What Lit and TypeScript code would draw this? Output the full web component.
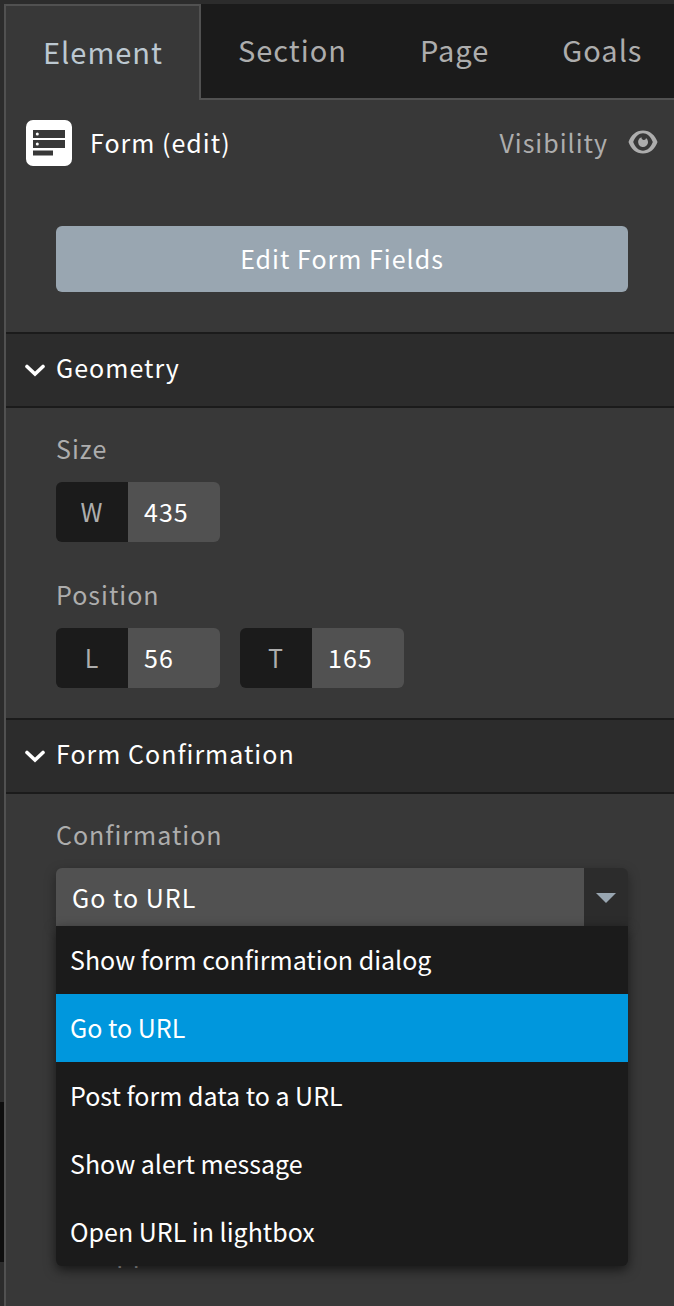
import { LitElement, html, css, svg } from "lit";
import { customElement, property, state } from "lit/decorators.js";
import { classMap } from "lit/directives/class-map.js";

const base = css`
  * {
    box-sizing: border-box;
  }
  button,
  input,
  select {
    font: inherit;
    color: inherit;
    letter-spacing: inherit;
    border: 0;
    margin: 0;
    padding: 0;
    background: none;
    outline: none;
  }
  button {
    cursor: pointer;
  }
`;

const chevron = svg`<path d="M2 2.5 L10 10 L18 2.5" fill="none" stroke="#fff" stroke-width="3.6" stroke-linecap="round" stroke-linejoin="miter" />`;

@customElement("panel-section")
export class PanelSection extends LitElement {
  @property() heading = "";
  @state() private open = true;

  static styles = [
    base,
    css`
      :host {
        display: block;
      }
      .heading {
        margin: 0;
        font: inherit;
      }
      .toggle {
        display: flex;
        align-items: center;
        gap: 10px;
        width: 100%;
        height: 76px;
        padding: 0 20px 6px 18px;
        background: #2c2c2c;
        border-top: 2px solid #1b1b1b;
        border-bottom: 2px solid #1b1b1b;
        color: #fff;
        text-align: left;
      }
      .arrow {
        width: 22px;
        height: 14px;
        margin-top: 8px;
      }
      .body {
        display: flex;
        flex-direction: column;
        gap: 36px;
        padding: 24px 46px 30px 50px;
      }
    `,
  ];

  render() {
    return html`
      <h2 class="heading">
        <button
          class="toggle"
          aria-expanded=${this.open}
          @click=${() => (this.open = !this.open)}
        >
          <svg class="arrow" viewBox="-1 0 22 14" aria-hidden="true">${chevron}</svg>
          <span>${this.heading}</span>
        </button>
      </h2>
      ${this.open ? html`<div class="body"><slot></slot></div>` : ""}
    `;
  }
}

@customElement("number-field")
export class NumberField extends LitElement {
  @property() label = "";
  @property() name = "";
  @property() value = "";

  static styles = [
    base,
    css`
      :host {
        display: block;
      }
      .field {
        display: grid;
        grid-template-columns: 72px 92px;
        height: 60px;
        border-radius: 6px;
        overflow: hidden;
      }
      .label {
        display: grid;
        place-items: center;
        padding-bottom: 2px;
        background: #1b1b1b;
        color: #adadad;
      }
      .input {
        min-width: 0;
        padding: 0 16px 2px;
        background: #515151;
        color: #fff;
      }
    `,
  ];

  render() {
    return html`
      <div class="field">
        <label class="label" for="input">${this.label}</label>
        <input class="input" id="input" type="text" inputmode="numeric" aria-label=${this.name} .value=${this.value} />
      </div>
    `;
  }
}

@customElement("app-root")
export class AppRoot extends LitElement {
  @state() private tab = "Element";
  @state() private confirmation = "Go to URL";
  @state() private menuOpen = true;

  private tabs = ["Element", "Section", "Page", "Goals"];
  private choices = [
    "Show form confirmation dialog",
    "Go to URL",
    "Post form data to a URL",
    "Show alert message",
    "Open URL in lightbox",
  ];

  static styles = [
    base,
    css`
      :host {
        display: grid;
        grid-template-columns: 4px 1fr;
        min-height: 100vh;
        padding-top: 4px;
        box-sizing: border-box;
        overflow: hidden;
        background: #2c2c2c;
        color: #fff;
        font-family: "Noto Sans CJK SC", "Noto Sans", sans-serif;
        font-size: 25px;
        line-height: 32px;
        letter-spacing: 1px;
      }
      .gutter {
        display: flex;
        flex-direction: column;
        justify-content: flex-end;
        padding-bottom: 44px;
      }
      .thumb {
        height: 160px;
        background: #0e0e0e;
      }
      .panel {
        min-width: 0;
        background: #383838;
        border-left: 2px solid #515151;
      }
      .tabs {
        display: flex;
        height: 96px;
        background: #1b1b1b;
      }
      .tab {
        padding: 0 36px 4px 37px;
        font-size: 29px;
        color: #adadad;
        border-bottom: 2px solid #515151;
      }
      .tab.active {
        background: #383838;
        color: #bcc8d1;
        border-top: 2px solid #515151;
        border-right: 2px solid #515151;
        border-bottom: 0;
      }
      .rest {
        flex: 1;
        border-bottom: 2px solid #515151;
      }
      .title {
        display: flex;
        align-items: center;
        gap: 18px;
        padding: 20px 16px 0 20px;
      }
      .badge {
        width: 46px;
        height: 46px;
      }
      .name {
        flex: 1;
        margin: 0;
        padding-bottom: 2px;
        font: inherit;
      }
      .visibility {
        display: flex;
        align-items: center;
        gap: 20px;
        padding-bottom: 2px;
        color: #adadad;
      }
      .eye {
        width: 30px;
        height: 24px;
      }
      .action {
        padding: 60px 46px 40px 50px;
      }
      .edit {
        display: block;
        width: 100%;
        height: 66px;
        padding-bottom: 2px;
        border-radius: 6px;
        background: #99a6b1;
      }
      .group {
        display: flex;
        flex-direction: column;
        gap: 18px;
      }
      .caption {
        color: #adadad;
      }
      .row {
        display: flex;
        gap: 20px;
      }
      .dropdown {
        position: relative;
        border-radius: 6px;
        box-shadow: 0 4px 12px rgba(0, 0, 0, 0.35);
      }
      .control {
        display: grid;
        grid-template-columns: 1fr 44px;
        height: 58px;
        border-radius: 6px 6px 0 0;
        overflow: hidden;
      }
      .select {
        appearance: none;
        min-width: 0;
        padding: 0 16px;
        background: #515151;
      }
      .select option {
        background: #1b1b1b;
      }
      .opener {
        display: grid;
        place-items: center;
        padding-top: 2px;
        background: #2c2c2c;
      }
      .triangle {
        width: 20px;
        height: 10px;
      }
      .menu {
        position: absolute;
        top: 100%;
        left: 0;
        right: 0;
        z-index: 1;
        border-radius: 0 0 6px 6px;
        overflow: hidden;
        background: #1b1b1b;
        box-shadow: 0 4px 12px rgba(0, 0, 0, 0.6);
        letter-spacing: normal;
      }
      .choice {
        display: block;
        width: 100%;
        height: 68px;
        padding: 0 14px 2px;
        text-align: left;
      }
      .choice.selected {
        background: #0097dd;
      }
      .check {
        display: flex;
        align-items: center;
        gap: 14px;
        padding-top: 273px;
        color: #adadad;
      }
      .box {
        appearance: none;
        width: 30px;
        height: 24px;
        border-radius: 4px;
        background: #515151;
      }
    `,
  ];

  private choose(value: string) {
    this.confirmation = value;
    this.menuOpen = false;
  }

  render() {
    return html`
      <div class="gutter"><div class="thumb"></div></div>
      <main class="panel">
        <nav class="tabs" role="tablist">
          ${this.tabs.map(
            (t) => html`<button
              role="tab"
              aria-selected=${t === this.tab}
              class=${classMap({ tab: true, active: t === this.tab })}
              @click=${() => (this.tab = t)}
            >${t}</button>`
          )}
          <span class="rest"></span>
        </nav>

        <header class="title">
          <svg class="badge" viewBox="0 0 46 46" aria-hidden="true">
            <rect width="46" height="46" rx="7" fill="#fff" />
            <path d="M7 10h32v8H7zM7 20h32v8H7zM7 30.500h20v5H7z" fill="#383838" />
            <circle cx="11.300" cy="14" r="1.500" fill="#fff" />
            <circle cx="11.300" cy="24" r="1.500" fill="#fff" />
          </svg>
          <h1 class="name">Form (edit)</h1>
          <button class="visibility">
            <span>Visibility</span>
            <svg class="eye" viewBox="0 0 30 24" aria-hidden="true">
              <path
                fill="#adadad"
                fill-rule="evenodd"
                d="M15 .5C22 .5 27 5 29.500 12C27 19 22 23.500 15 23.500S3 19 .5 12C3 5 8 .5 15 .5zM15 3.300C11 3.300 7.300 6.500 5.200 12c2.100 5.500 5.800 8.700 9.800 8.700S22.700 17.500 24.800 12C22.700 6.500 19 3.300 15 3.300z"
              />
              <path fill="#adadad" d="M13.500 7.300a5 5 0 1 0 4.600 .8a2.200 2.200 0 1 1-4.600 -.8z" />
            </svg>
          </button>
        </header>

        <div class="action"><button class="edit">Edit Form Fields</button></div>

        <panel-section heading="Geometry">
          <div class="group">
            <span class="caption">Size</span>
            <div class="row">
              <number-field label="W" name="Width" value="435"></number-field>
            </div>
          </div>
          <div class="group">
            <span class="caption">Position</span>
            <div class="row">
              <number-field label="L" name="Left" value="56"></number-field>
              <number-field label="T" name="Top" value="165"></number-field>
            </div>
          </div>
        </panel-section>

        <panel-section heading="Form Confirmation">
          <div class="group">
            <label class="caption" for="confirmation">Confirmation</label>
            <div class="dropdown">
              <div class="control">
                <select
                  class="select"
                  id="confirmation"
                  @change=${(e: Event) => this.choose((e.target as HTMLSelectElement).value)}
                >
                  ${this.choices.map(
                    (c) => html`<option ?selected=${c === this.confirmation}>${c}</option>`
                  )}
                </select>
                <button
                  class="opener"
                  aria-label="Confirmation choices"
                  aria-expanded=${this.menuOpen}
                  @click=${() => (this.menuOpen = !this.menuOpen)}
                >
                  <svg class="triangle" viewBox="0 0 20 10" aria-hidden="true">
                    <path d="M0 0h20L10 10z" fill="#99a6b1" />
                  </svg>
                </button>
              </div>
              ${this.menuOpen
                ? html`<div class="menu" role="listbox">
                    ${this.choices.map(
                      (c) => html`<button
                        role="option"
                        aria-selected=${c === this.confirmation}
                        class=${classMap({ choice: true, selected: c === this.confirmation })}
                        @click=${() => this.choose(c)}
                      >${c}</button>`
                    )}
                  </div>`
                : ""}
            </div>
          </div>
          <label class="check">
            <input class="box" type="checkbox" />
            <span>Append form data to URL</span>
          </label>
        </panel-section>
      </main>
    `;
  }
}
